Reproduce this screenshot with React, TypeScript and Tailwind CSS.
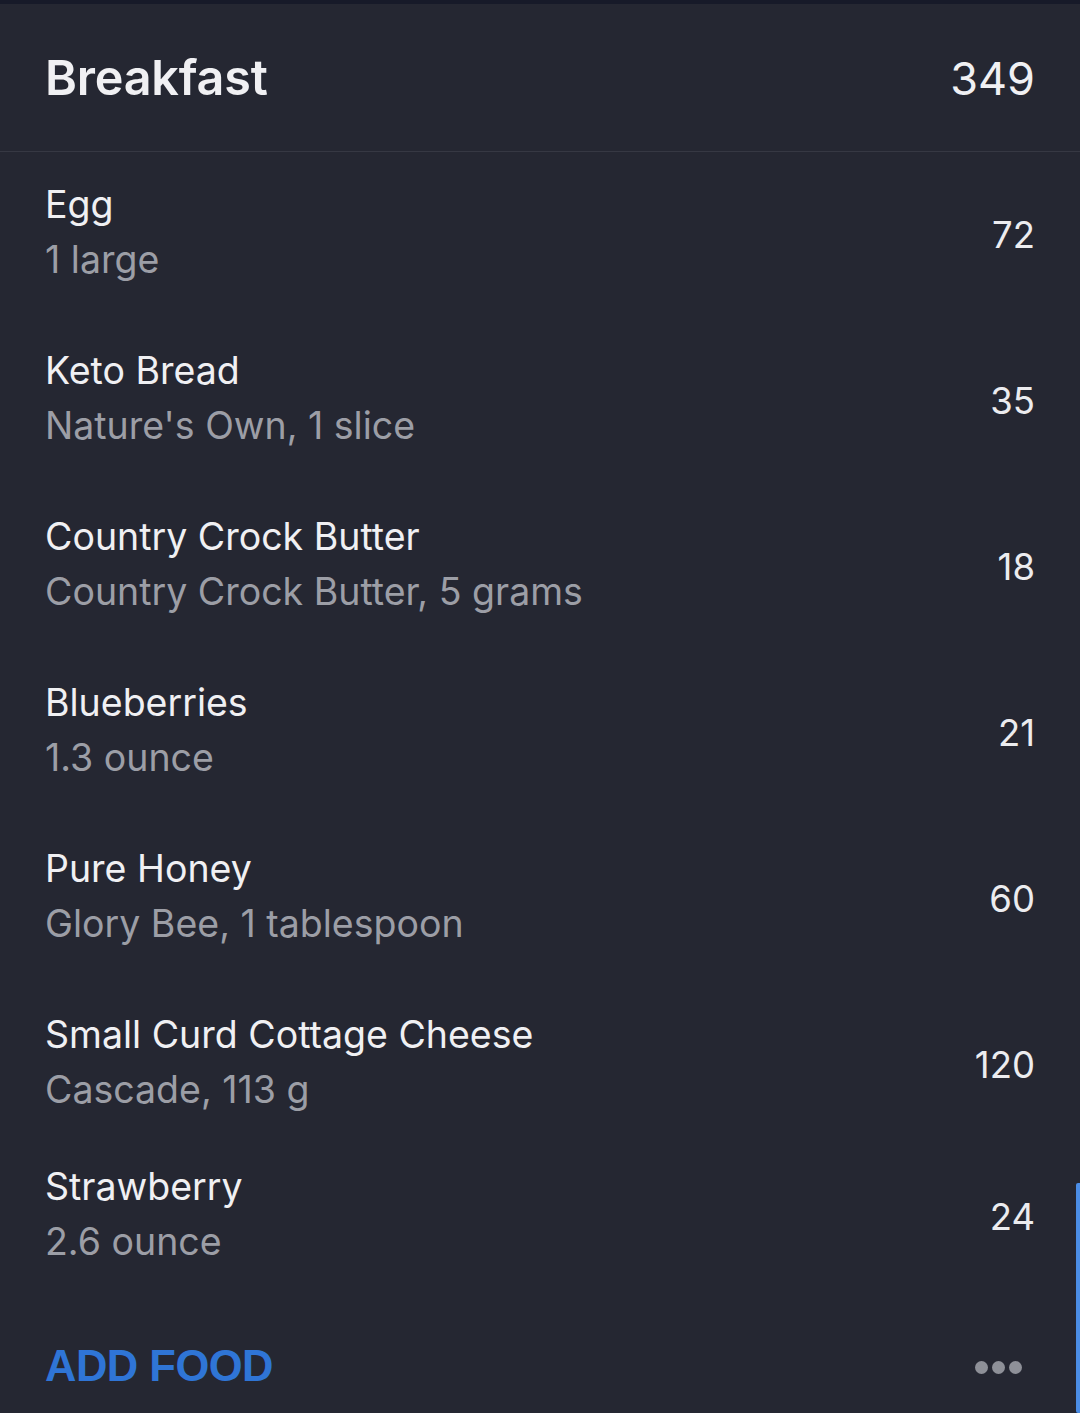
const items = [
  { name: "Egg", detail: "1 large", cal: 72, h: "h-[166px]" },
  { name: "Keto Bread", detail: "Nature's Own, 1 slice", cal: 35, h: "h-[166px]" },
  { name: "Country Crock Butter", detail: "Country Crock Butter, 5 grams", cal: 18, h: "h-[166px]" },
  { name: "Blueberries", detail: "1.3 ounce", cal: 21, h: "h-[166px]" },
  { name: "Pure Honey", detail: "Glory Bee, 1 tablespoon", cal: 60, h: "h-[166px]" },
  { name: "Small Curd Cottage Cheese", detail: "Cascade, 113 g", cal: 120, h: "h-[152px]" },
  { name: "Strawberry", detail: "2.6 ounce", cal: 24, h: "h-[166px]" },
];

export default function App() {
  return (
    <div
      className="relative w-[1080px] h-[1413px] overflow-hidden bg-[#252732] text-[#f0f0f3]"
      style={{ fontFamily: "Inter, 'Noto Sans', sans-serif" }}
    >
      <div className="h-[4px] bg-[#171a29]" />

      {/* Header */}
      <div className="h-[148px] flex items-center justify-between pl-[45px] pr-[45px] border-b border-[#363843]">
        <span className="text-[48.5px] font-semibold tracking-[-0.2px] pt-[2px]">Breakfast</span>
        <span className="text-[45px] font-normal pt-[2px]">349</span>
      </div>

      {/* Food list */}
      {items.map((it) => (
        <div key={it.name} className={`${it.h} flex justify-between pl-[45px] pr-[45px]`}>
          <div className="pt-[25px] flex flex-col">
            <span className="text-[37.5px] leading-[55px] text-[#f0f0f3]">{it.name}</span>
            <span className="text-[37.5px] leading-[55px] text-[#9c9ea6]">{it.detail}</span>
          </div>
          <div className="pt-[56px] text-[36.5px] leading-[55px] text-[#ececef]">{it.cal}</div>
        </div>
      ))}

      {/* Footer */}
      <div className="flex items-center justify-between pl-[45px] pr-[58px] pt-[22px] h-[112px]">
        <span
          className="text-[43.5px] font-bold text-[#2f75d6] tracking-[-0.5px]"
          style={{ fontFamily: "'Liberation Sans', Arial, sans-serif" }}
        >
          ADD FOOD
        </span>
        <div className="flex gap-[4px]">
          <span className="w-[13px] h-[13px] rounded-full bg-[#8e9098]" />
          <span className="w-[13px] h-[13px] rounded-full bg-[#8e9098]" />
          <span className="w-[13px] h-[13px] rounded-full bg-[#8e9098]" />
        </div>
      </div>

      {/* scroll indicator */}
      <div className="absolute right-0 top-[1183px] w-[4px] h-[230px] bg-[#4b8de6] rounded-l-[2px]" />
    </div>
  );
}
